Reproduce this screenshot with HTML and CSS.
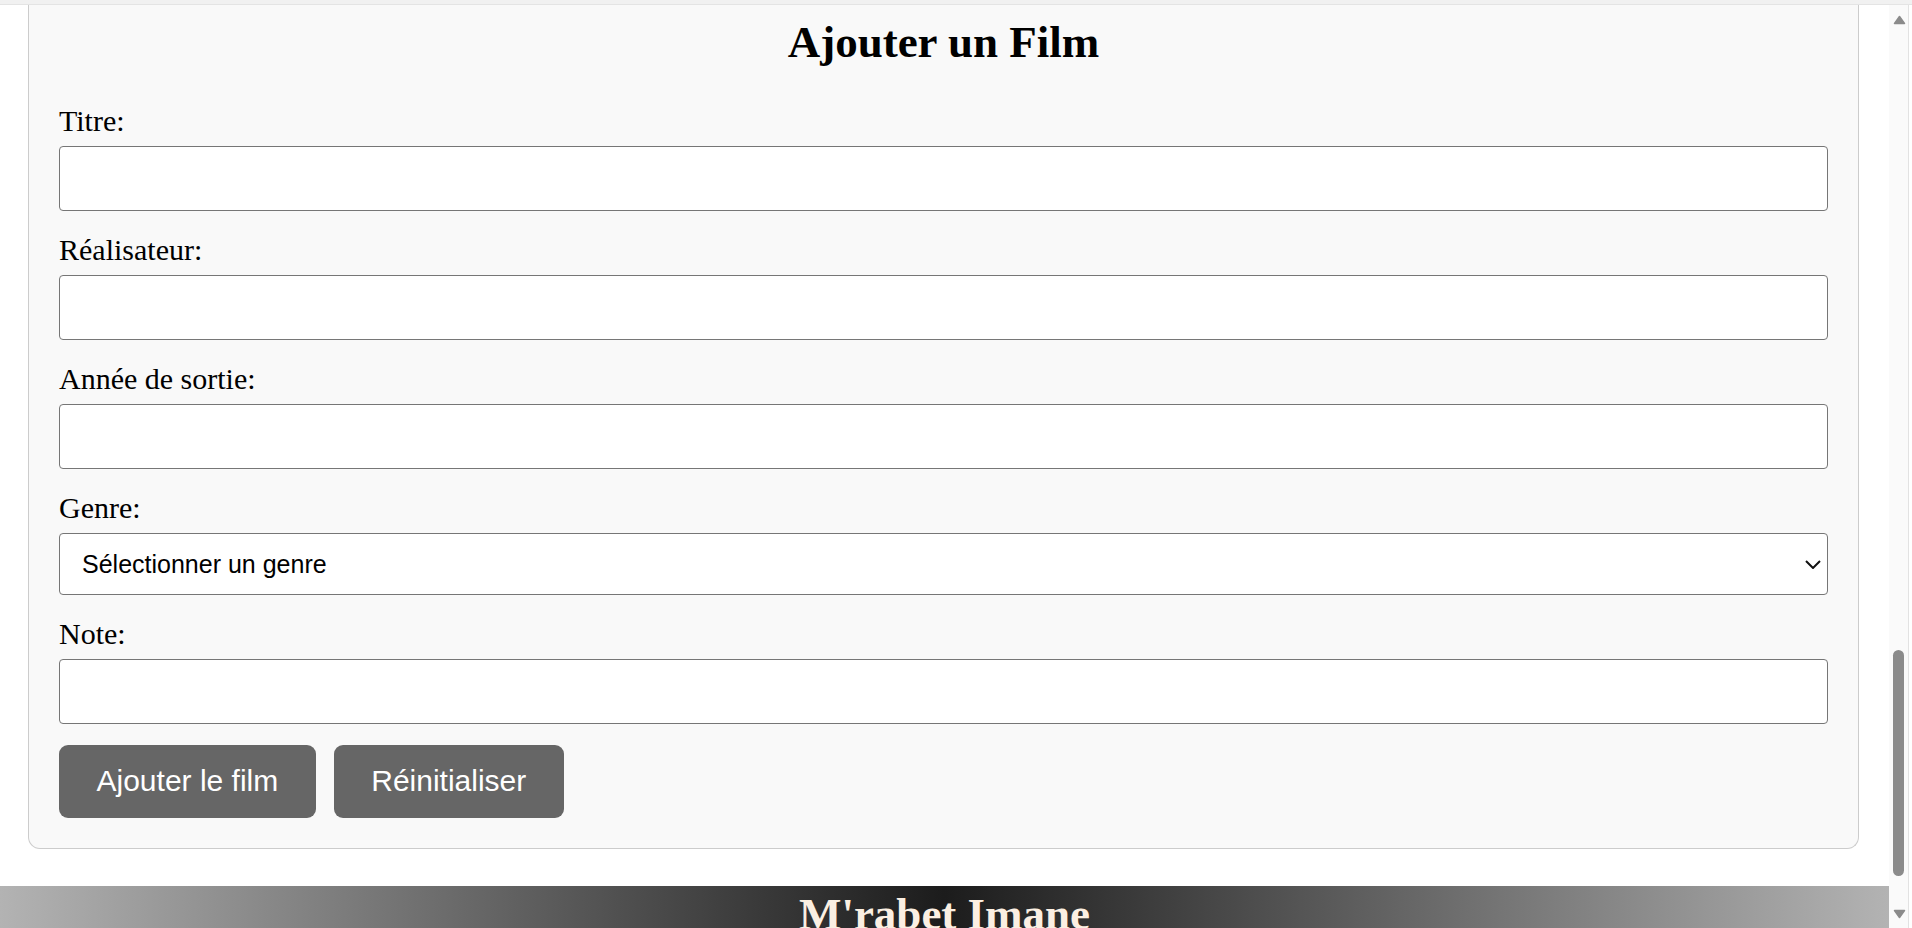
FILE: index.html
```html
<!DOCTYPE html>
<html lang="fr">
<head>
<meta charset="utf-8">
<title>Ajouter un Film</title>
<link rel="stylesheet" href="styles.css">
</head>
<body>
<div class="chrome-edge"></div>
<div class="frame">
  <div class="page">
    <section class="card">
      <h2 class="card-title">Ajouter un Film</h2>
      <form class="film-form">
        <div class="field">
          <label class="field-label" for="titre">Titre:</label>
          <input class="field-input" id="titre" type="text">
        </div>
        <div class="field">
          <label class="field-label" for="realisateur">Réalisateur:</label>
          <input class="field-input" id="realisateur" type="text">
        </div>
        <div class="field">
          <label class="field-label" for="annee">Année de sortie:</label>
          <input class="field-input" id="annee" type="text">
        </div>
        <div class="field field-select-group">
          <label class="field-label" for="genre">Genre:</label>
          <div class="select-wrap">
            <select class="field-select" id="genre">
              <option>Sélectionner un genre</option>
            </select>
            <svg class="select-chevron" viewBox="0 0 16 9" width="16" height="9"><path d="M1 1 L8 8 L15 1" fill="none" stroke="#111" stroke-width="2"/></svg>
          </div>
        </div>
        <div class="field field-last">
          <label class="field-label" for="note">Note:</label>
          <input class="field-input" id="note" type="text">
        </div>
        <div class="actions">
          <button class="btn" type="button">Ajouter le film</button>
          <button class="btn" type="button">Réinitialiser</button>
        </div>
      </form>
    </section>
    <footer class="footer">
      <p class="footer-name">M'rabet Imane</p>
    </footer>
  </div>
  <div class="scrollbar">
    <div class="scroll-arrow">
      <svg viewBox="0 0 13 10" width="13" height="10"><path d="M6.5 1.5 L11.5 8.5 L1.5 8.5 Z" fill="#8b8b8b" stroke="#8b8b8b" stroke-width="1.5" stroke-linejoin="round"/></svg>
    </div>
    <div class="scroll-track">
      <div class="scroll-thumb"></div>
    </div>
    <div class="scroll-arrow scroll-arrow-down">
      <svg viewBox="0 0 13 10" width="13" height="10"><path d="M1.5 1.5 L11.5 1.5 L6.5 8.5 Z" fill="#8b8b8b" stroke="#8b8b8b" stroke-width="1.5" stroke-linejoin="round"/></svg>
    </div>
  </div>
</div>
</body>
</html>
```
FILE: styles.css
```css
html, body {
  margin: 0;
  padding: 0;
}

body {
  width: 1912px;
  height: 928px;
  overflow: hidden;
  background: #ffffff;
  font-family: "Liberation Serif", "Times New Roman", serif;
  color: #000;
  display: grid;
  grid-template-rows: 5px 1fr;
}

.chrome-edge {
  background: #f1f1f1;
  border-bottom: 1px solid #e4e4e4;
}

.frame {
  display: grid;
  grid-template-columns: 1fr 23px;
  min-height: 0;
  overflow: hidden;
}

.page {
  display: flex;
  flex-direction: column;
  min-height: 0;
  overflow: hidden;
}

.card {
  margin: 0 30px 0 28px;
  background: #f9f9f9;
  border: 1px solid #cccccc;
  border-top: none;
  border-radius: 0 0 12px 12px;
  padding: 0 30px 30px 30px;
}

.card-title {
  margin: 11px 0 36px 0;
  font-size: 45px;
  font-weight: bold;
  text-align: center;
  line-height: normal;
}

.film-form {
  display: flex;
  flex-direction: column;
}

.field {
  display: flex;
  flex-direction: column;
  margin-bottom: 22px;
}

.field-last {
  margin-bottom: 21px;
}

.field-label {
  font-size: 30px;
  line-height: normal;
  margin-bottom: 8px;
}

.field-input {
  display: block;
  box-sizing: border-box;
  width: 100%;
  height: 65px;
  margin: 0;
  border: 1px solid #767676;
  border-radius: 4px;
  background: #ffffff;
  font-family: "Liberation Sans", Arial, sans-serif;
  font-size: 25px;
  padding: 0 10px;
}

.select-wrap {
  position: relative;
}

.field-select {
  display: block;
  box-sizing: border-box;
  width: 100%;
  height: 62px;
  margin: 0;
  border: 1px solid #767676;
  border-radius: 4px;
  background: #ffffff;
  -webkit-appearance: none;
  appearance: none;
  font-family: "Liberation Sans", Arial, sans-serif;
  font-size: 25px;
  color: #000;
  padding: 0 40px 0 22px;
}

.select-chevron {
  position: absolute;
  right: 7px;
  top: 27px;
}

.actions {
  display: flex;
  gap: 18px;
}

.btn {
  background: #666666;
  color: #ffffff;
  border: none;
  border-radius: 9px;
  padding: 19.25px 37.5px;
  font-family: "Liberation Sans", Arial, sans-serif;
  font-size: 30px;
  line-height: normal;
  cursor: pointer;
}

.footer {
  margin-top: 37px;
  background: linear-gradient(to right, #b3b3b3, #1c1c1c 50%, #b3b3b3);
  flex-shrink: 0;
  padding-bottom: 20px;
}

.footer-name {
  margin: 0;
  text-align: center;
  font-size: 45px;
  font-weight: bold;
  line-height: 56px;
  color: #fbefe2;
}

.scrollbar {
  background: #fafafa;
  display: grid;
  grid-template-rows: 30px 1fr 28px;
  border-right: 1px solid #e2e2e2;
  margin-right: 3px;
}

.scroll-arrow {
  display: flex;
  justify-content: center;
  align-items: flex-start;
  padding-top: 10px;
  padding-left: 1px;
}

.scroll-arrow-down {
  padding-top: 9px;
}

.scroll-track {
  display: flex;
  flex-direction: column;
  justify-content: flex-end;
  padding-bottom: 24px;
}

.scroll-thumb {
  height: 226px;
  width: 11px;
  margin-left: 4px;
  border-radius: 6px;
  background: #8b8b8b;
}
```
